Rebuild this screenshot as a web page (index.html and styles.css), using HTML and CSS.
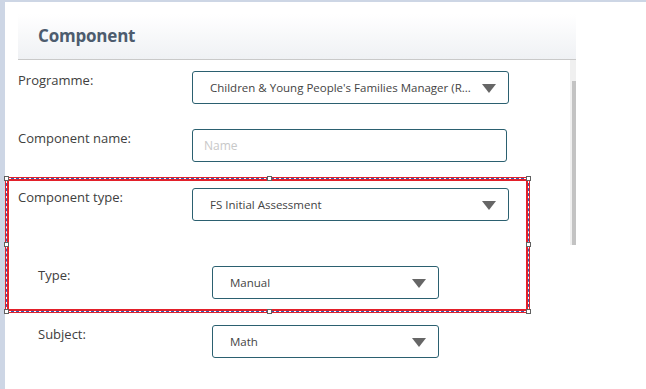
FILE: index.html
```html
<!DOCTYPE html>
<html lang="en">
  <head>
    <meta charset="UTF-8" />
    <title>Component</title>
    <link rel="stylesheet" href="styles.css">
  </head>
  <body>
    <div class="page">
      <!-- HEADER -->
      <div class="header">
        <h1>Component</h1>
      </div>

      <!-- FORM + SCROLLBAR -->
      <div class="body">
        <div class="form">
          <div class="row">
            <label class="label">Programme:</label>
            <div class="select wide">
              <span class="value">Children &amp; Young People's Families Manager (R...</span>
              <i class="arrow"></i>
            </div>
          </div>

          <div class="row">
            <label class="label">Component name:</label>
            <input class="text-input" type="text" placeholder="Name" />
          </div>

          <div class="selected-group">
            <div class="row">
              <label class="label">Component type:</label>
              <div class="select wide">
                <span class="value">FS Initial Assessment</span>
                <i class="arrow"></i>
              </div>
            </div>
            <div class="row sub">
              <label class="label">Type:</label>
              <div class="select narrow">
                <span class="value">Manual</span>
                <i class="arrow"></i>
              </div>
            </div>
            <span class="handle h-tl"></span>
            <span class="handle h-tm"></span>
            <span class="handle h-tr"></span>
            <span class="handle h-ml"></span>
            <span class="handle h-mr"></span>
            <span class="handle h-bl"></span>
            <span class="handle h-bm"></span>
            <span class="handle h-br"></span>
          </div>

          <div class="row sub subject">
            <label class="label">Subject:</label>
            <div class="select narrow">
              <span class="value">Math</span>
              <i class="arrow"></i>
            </div>
          </div>
        </div>

        <div class="scrollbar">
          <div class="thumb"></div>
        </div>
      </div>
    </div>
  </body>
</html>
```

FILE: styles.css
```css
/* Global */
* {
  box-sizing: border-box;
}
body {
  margin: 0;
  height: 389px;
  overflow: hidden;
  background: #cdd6e5;
  font-family: "Open Sans", "Liberation Sans", sans-serif;
  color: #3a3a3a;
}

/* PAGE */
.page {
  margin: 2px 0 0 5px;
  height: 387px;
  background: #fff;
  padding-top: 12px;
}

/* HEADER */
.header {
  width: 558px;
  margin-left: 13px;
  height: 46px;
  display: flex;
  align-items: center;
  padding: 0 0 2px 20px;
  background: linear-gradient(to bottom, #ffffff 0%, #eff1f4 100%);
  border-bottom: 1px solid #c9c9c9;
}
.header h1 {
  margin: 0;
  font-size: 17px;
  font-weight: 700;
  letter-spacing: -0.2px;
  color: #4d5c6e;
}

/* BODY */
.body {
  display: flex;
  width: 571px;
}
.form {
  flex: 1;
  padding-top: 11px;
}
.scrollbar {
  width: 6px;
  height: 185px;
  background: #f0f0f0;
  padding: 21px 0 0 2px;
}
.thumb {
  width: 4px;
  height: 164px;
  background: #c3c3c3;
}

/* ROWS */
.row {
  display: flex;
  align-items: flex-start;
  padding-left: 13px;
}
.row + .row {
  margin-top: 25px;
}
.label {
  width: 174px;
  flex-shrink: 0;
  font-size: 13px;
  line-height: 18px;
  color: #404040;
}
.row.sub {
  padding-left: 33px;
}
.selected-group .row {
  padding-left: 9px;
}
.selected-group .row.sub {
  padding-left: 29px;
  margin-top: 45px;
}

/* CONTROLS */
.select,
.text-input {
  height: 33px;
  border: 1px solid #2b6070;
  border-radius: 3px;
  background: #fff;
}
.select {
  display: flex;
  align-items: center;
  justify-content: space-between;
  padding: 0 12px 0 17px;
}
.select.wide {
  width: 317px;
}
.select.narrow {
  width: 227px;
}
.value {
  font-size: 11.5px;
  color: #444;
  white-space: nowrap;
}
.arrow {
  width: 0;
  height: 0;
  border-left: 7px solid transparent;
  border-right: 7px solid transparent;
  border-top: 9px solid #666;
  margin-top: 2px;
}
.text-input {
  width: 315px;
  padding: 0 11px;
  font-family: inherit;
  font-size: 12px;
  color: #444;
  outline: none;
}
.text-input::placeholder {
  color: #c8c8c8;
}

/* SELECTION OVERLAY */
.selected-group {
  position: relative;
  width: 525px;
  margin-top: 15px;
  padding: 7px 0 10px;
  border: 4px solid #e3202a;
}
.selected-group::before,
.selected-group::after {
  content: "";
  position: absolute;
  inset: -3px;
}
.selected-group::before {
  border: 1px solid #fff;
}
.selected-group::after {
  border: 1px dashed #3561b5;
}
.handle {
  position: absolute;
  z-index: 1;
  width: 5px;
  height: 5px;
  background: #fff;
  border: 1px solid #606060;
}
.h-tl { left: -5px; top: -5px; }
.h-tm { left: 258px; top: -5px; }
.h-tr { right: -5px; top: -5px; }
.h-ml { left: -5px; top: 61px; }
.h-mr { right: -5px; top: 61px; }
.h-bl { left: -5px; bottom: -5px; }
.h-bm { left: 258px; bottom: -5px; }
.h-br { right: -5px; bottom: -5px; }

.subject {
  margin-top: 12px;
}
```
